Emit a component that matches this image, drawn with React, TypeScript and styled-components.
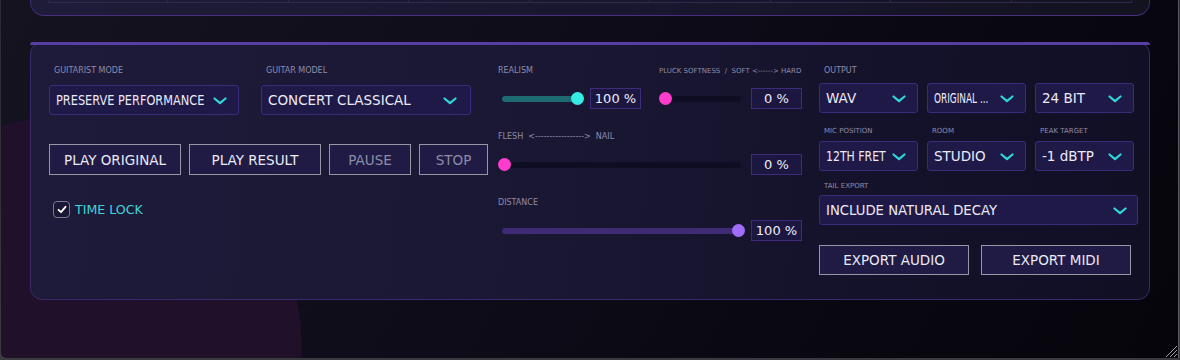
import styled, { createGlobalStyle } from 'styled-components';

const GlobalStyle = createGlobalStyle`
  html, body {
    margin: 0;
    padding: 0;
    background: #34343c;
  }
  * {
    box-sizing: border-box;
  }
`;

const UI_FONT = `"DejaVu Sans", "Liberation Sans", sans-serif`;

const App = () => {
  return (
    <>
      <GlobalStyle />
      <Screen>
        <Window>
          <TopPanel>
            <TopGrid>
              {Array.from({ length: 9 }).map((_, i) => (
                <TopCell key={i} />
              ))}
            </TopGrid>
          </TopPanel>

          <MainPanel>
            <LeftColumn>
              <FieldRow>
                <Field>
                  <Label $indent={5}>GUITARIST MODE</Label>
                  <Select $width={190}>
                    <SelectText $squeeze={0.84}>PRESERVE PERFORMANCE</SelectText>
                    <Chevron />
                  </Select>
                </Field>
                <Field>
                  <Label $indent={5}>GUITAR MODEL</Label>
                  <Select $width={210} $chevronGap={13}>
                    <SelectText>CONCERT CLASSICAL</SelectText>
                    <Chevron />
                  </Select>
                </Field>
              </FieldRow>

              <ButtonRow>
                <Button $width={132}>PLAY ORIGINAL</Button>
                <Button $width={132}>PLAY RESULT</Button>
                <Button $width={82} $dim>
                  PAUSE
                </Button>
                <Button $width={69} $dim>
                  STOP
                </Button>
              </ButtonRow>

              <CheckRow>
                <CheckBox>
                  <svg width="10" height="9" viewBox="0 0 10 9">
                    <polyline
                      points="1.5,4.8 4,7.2 8.5,1.8"
                      fill="none"
                      stroke="#ffffff"
                      strokeWidth="1.8"
                      strokeLinecap="round"
                      strokeLinejoin="round"
                    />
                  </svg>
                </CheckBox>
                <CheckLabel>TIME LOCK</CheckLabel>
              </CheckRow>
            </LeftColumn>

            <MiddleColumn>
              <SliderGroup>
                <SplitRow>
                  <SliderBlock>
                    <Label>REALISM</Label>
                    <SliderRow>
                      <Slider width={86} value={1} fill="#1d6a72" thumb="#35ece3" />
                      <ValueBox>100 %</ValueBox>
                    </SliderRow>
                  </SliderBlock>
                  <SliderBlock>
                    <Label $small>PLUCK SOFTNESS &nbsp;/&nbsp; SOFT &lt;------&gt; HARD</Label>
                    <SliderRow>
                      <Slider width={86} value={0} fill="#3a2a70" thumb="#ff3ccc" />
                      <ValueBox>0 %</ValueBox>
                    </SliderRow>
                  </SliderBlock>
                </SplitRow>
              </SliderGroup>

              <SliderGroup>
                <Label>FLESH &nbsp;&lt;-----------------&gt;&nbsp; NAIL</Label>
                <SliderRow>
                  <Slider width={247} value={0} fill="#3a2a70" thumb="#ff3ccc" />
                  <ValueBox>0 %</ValueBox>
                </SliderRow>
              </SliderGroup>

              <SliderGroup>
                <Label>DISTANCE</Label>
                <SliderRow>
                  <Slider width={247} value={1} fill="#3e2b74" thumb="#a06ef6" />
                  <ValueBox>100 %</ValueBox>
                </SliderRow>
              </SliderGroup>
            </MiddleColumn>

            <RightColumn>
              <OutputGrid>
                <GridLabel>
                  <Label $indent={5}>OUTPUT</Label>
                </GridLabel>
                <Select>
                  <SelectText>WAV</SelectText>
                  <Chevron />
                </Select>
                <Select>
                  <SelectText $squeeze={0.66}>ORIGINAL ...</SelectText>
                  <Chevron />
                </Select>
                <Select>
                  <SelectText>24 BIT</SelectText>
                  <Chevron />
                </Select>

                <SmallLabelCell>
                  <Label $indent={5} $small>MIC POSITION</Label>
                </SmallLabelCell>
                <SmallLabelCell>
                  <Label $indent={5} $small>ROOM</Label>
                </SmallLabelCell>
                <SmallLabelCell>
                  <Label $indent={5} $small>PEAK TARGET</Label>
                </SmallLabelCell>
                <Select>
                  <SelectText $squeeze={0.81}>12TH FRET</SelectText>
                  <Chevron />
                </Select>
                <Select>
                  <SelectText>STUDIO</SelectText>
                  <Chevron />
                </Select>
                <Select>
                  <SelectText>-1 dBTP</SelectText>
                  <Chevron />
                </Select>
              </OutputGrid>

              <TailField>
                <Label $indent={5} $small>TAIL EXPORT</Label>
                <Select $width={319} $chevronGap={10}>
                  <SelectText $squeeze={0.98}>INCLUDE NATURAL DECAY</SelectText>
                  <Chevron />
                </Select>
              </TailField>

              <ExportRow>
                <Button $width={150} $height={30}>
                  EXPORT AUDIO
                </Button>
                <Button $width={150} $height={30}>
                  EXPORT MIDI
                </Button>
              </ExportRow>
            </RightColumn>
          </MainPanel>

          <ResizeGrip width="16" height="16" viewBox="0 0 16 16">
            <line x1="15" y1="4" x2="4" y2="15" stroke="#9a9aa2" strokeWidth="1" />
            <line x1="15" y1="8" x2="8" y2="15" stroke="#9a9aa2" strokeWidth="1" />
            <line x1="15" y1="12" x2="12" y2="15" stroke="#9a9aa2" strokeWidth="1" />
          </ResizeGrip>
        </Window>
      </Screen>
    </>
  );
};

export default App;

type SliderProps = {
  width: number;
  value: number;
  fill: string;
  thumb: string;
};

const Slider = ({ width, value, fill, thumb }: SliderProps) => {
  // thumb centre travels from 6.5px to width - 6.5px
  const centre = 6.5 + value * (width - 13);
  return (
    <SliderArea $width={width}>
      <Track>
        <TrackFill style={{ width: `${centre - 4}px`, background: fill }} />
      </Track>
      <Thumb style={{ left: `${centre - 6.5}px`, background: thumb }} />
    </SliderArea>
  );
};

const Chevron = () => (
  <ChevronIcon width="14" height="8" viewBox="0 0 14 8">
    <polyline
      points="1.5,1.5 7,6.2 12.5,1.5"
      fill="none"
      stroke="#2fd6da"
      strokeWidth="2.2"
      strokeLinecap="round"
      strokeLinejoin="round"
    />
  </ChevronIcon>
);

const Screen = styled.div`
  width: 1180px;
  height: 360px;
  overflow: hidden;
  background: linear-gradient(180deg, #2a2a33 0%, #3a3a40 100%);
`;

const Window = styled.div`
  position: relative;
  width: 1178px;
  height: 358px;
  margin-left: 1px;
  padding-left: 29px;
  border-right: 1px solid #5b5b63;
  border-bottom-left-radius: 6px;
  overflow: hidden;
  background:
    radial-gradient(circle 231px at 70px 346px, #21102a 99.5%, rgba(33, 16, 42, 0) 100%),
    linear-gradient(120deg, #14131f 0%, #0d0c18 45%, #06050c 100%);
`;

const TopPanel = styled.div`
  width: 1120px;
  height: 16px;
  padding: 0 17px;
  border: 1px solid #3b2b70;
  border-top: none;
  border-bottom-color: #45317f;
  border-radius: 0 0 14px 14px;
  background: linear-gradient(90deg, #1e1c38 0%, #19172f 55%, #13121f 100%);
`;

const TopGrid = styled.div`
  display: grid;
  grid-template-columns: repeat(9, 1fr);
  height: 3px;
  border-bottom: 1px solid #2f2a4e;
`;

const TopCell = styled.div`
  border-right: 1px solid #2a2646;
  &:first-child {
    border-left: 1px solid #2a2646;
  }
`;

const MainPanel = styled.div`
  position: relative;
  display: flex;
  width: 1120px;
  height: 258px;
  margin-top: 26px;
  padding: 23px 11px 0 18px;
  border: 1px solid #3a2a6c;
  border-radius: 12px;
  background: linear-gradient(95deg, #1d1b39 0%, #1a1834 40%, #15132c 70%, #110f24 100%);

  &::before {
    content: '';
    position: absolute;
    top: -1px;
    left: -1px;
    right: -1px;
    height: 3px;
    border-radius: 3px 3px 0 0;
    background: #583ea2;
  }
`;

const LeftColumn = styled.div`
  display: flex;
  flex-direction: column;
  width: 439px;
`;

const FieldRow = styled.div`
  display: flex;
  gap: 22px;
`;

const Field = styled.div`
  display: flex;
  flex-direction: column;
  gap: 9px;
`;

const Label = styled.div<{ $indent?: number; $small?: boolean }>`
  height: 10px;
  padding-left: ${(p) => p.$indent ?? 0}px;
  font-family: ${UI_FONT};
  font-size: ${(p) => (p.$small ? 7 : 8)}px;
  line-height: 10px;
  color: #908cab;
  white-space: nowrap;
`;

const Select = styled.div<{ $width?: number; $chevronGap?: number }>`
  display: flex;
  align-items: center;
  gap: 4px;
  width: ${(p) => (p.$width ? `${p.$width}px` : '100%')};
  height: 30px;
  padding: 0 ${(p) => p.$chevronGap ?? 11}px 0 6px;
  border: 1px solid #3c2b7a;
  border-radius: 3px;
  background: #1e1946;
  font-family: ${UI_FONT};
  font-size: 13.5px;
  color: #eceaf8;
  white-space: nowrap;
`;

// long entries get squeezed horizontally to fit the box
const SelectText = styled.span<{ $squeeze?: number }>`
  flex: 1;
  min-width: 0;
  white-space: nowrap;
  transform: scaleX(${(p) => p.$squeeze ?? 1});
  transform-origin: left center;
`;

const ChevronIcon = styled.svg`
  flex-shrink: 0;
  margin-top: 1px;
`;

const ButtonRow = styled.div`
  display: flex;
  gap: 8px;
  margin-top: 29px;
`;

const Button = styled.div<{ $width: number; $height?: number; $dim?: boolean }>`
  display: flex;
  align-items: center;
  justify-content: center;
  width: ${(p) => p.$width}px;
  height: ${(p) => p.$height ?? 31}px;
  border: 1px solid #9796a4;
  background: #1f1b45;
  font-family: ${UI_FONT};
  font-size: 13.5px;
  color: ${(p) => (p.$dim ? '#8e8ba6' : '#ebe9f5')};
`;

const CheckRow = styled.div`
  display: flex;
  align-items: center;
  gap: 5px;
  margin-top: 26px;
  padding-left: 4px;
`;

const CheckBox = styled.div`
  display: flex;
  align-items: center;
  justify-content: center;
  width: 17px;
  height: 17px;
  border: 1.5px solid #7c798f;
  border-radius: 4px;
  background: #1a1734;
`;

const CheckLabel = styled.span`
  font-family: ${UI_FONT};
  font-size: 12.6px;
  color: #3fd4da;
`;

const MiddleColumn = styled.div`
  display: flex;
  flex-direction: column;
  gap: 23px;
  width: 304px;
  margin-left: 10px;
`;

const SliderGroup = styled.div`
  display: flex;
  flex-direction: column;
  gap: 12px;
`;

const SplitRow = styled.div`
  display: flex;
  gap: 18px;
`;

const SliderBlock = styled.div`
  display: flex;
  flex-direction: column;
  gap: 12px;
  width: 143px;
`;

const SliderRow = styled.div`
  display: flex;
  align-items: center;
  gap: 6px;
`;

const SliderArea = styled.div<{ $width: number }>`
  position: relative;
  display: flex;
  align-items: center;
  width: ${(p) => p.$width}px;
  height: 21px;
  padding: 0 4px;
`;

const Track = styled.div`
  flex: 1;
  height: 6px;
  border-radius: 3px;
  background: #0f0d21;
  overflow: hidden;
`;

const TrackFill = styled.div`
  height: 100%;
`;

const Thumb = styled.div`
  position: absolute;
  top: 4px;
  width: 13px;
  height: 13px;
  border-radius: 50%;
`;

const ValueBox = styled.div`
  display: flex;
  align-items: center;
  justify-content: center;
  width: 51px;
  height: 21px;
  border: 1px solid #3e2c7a;
  background: #1c1741;
  font-family: ${UI_FONT};
  font-size: 13px;
  color: #f0eef9;
`;

const RightColumn = styled.div`
  display: flex;
  flex-direction: column;
  width: 319px;
  margin-left: 17px;
`;

const OutputGrid = styled.div`
  display: grid;
  grid-template-columns: repeat(3, 99px);
  column-gap: 9px;
`;

const GridLabel = styled.div`
  grid-column: 1 / -1;
  margin-bottom: 7px;
`;

const SmallLabelCell = styled.div`
  margin-top: 13px;
  margin-bottom: 5px;
`;

const TailField = styled.div`
  display: flex;
  flex-direction: column;
  gap: 4px;
  margin-top: 10px;
`;

const ExportRow = styled.div`
  display: flex;
  gap: 12px;
  margin-top: 20px;
`;

const ResizeGrip = styled.svg`
  position: absolute;
  right: 0;
  bottom: 0;
`;
